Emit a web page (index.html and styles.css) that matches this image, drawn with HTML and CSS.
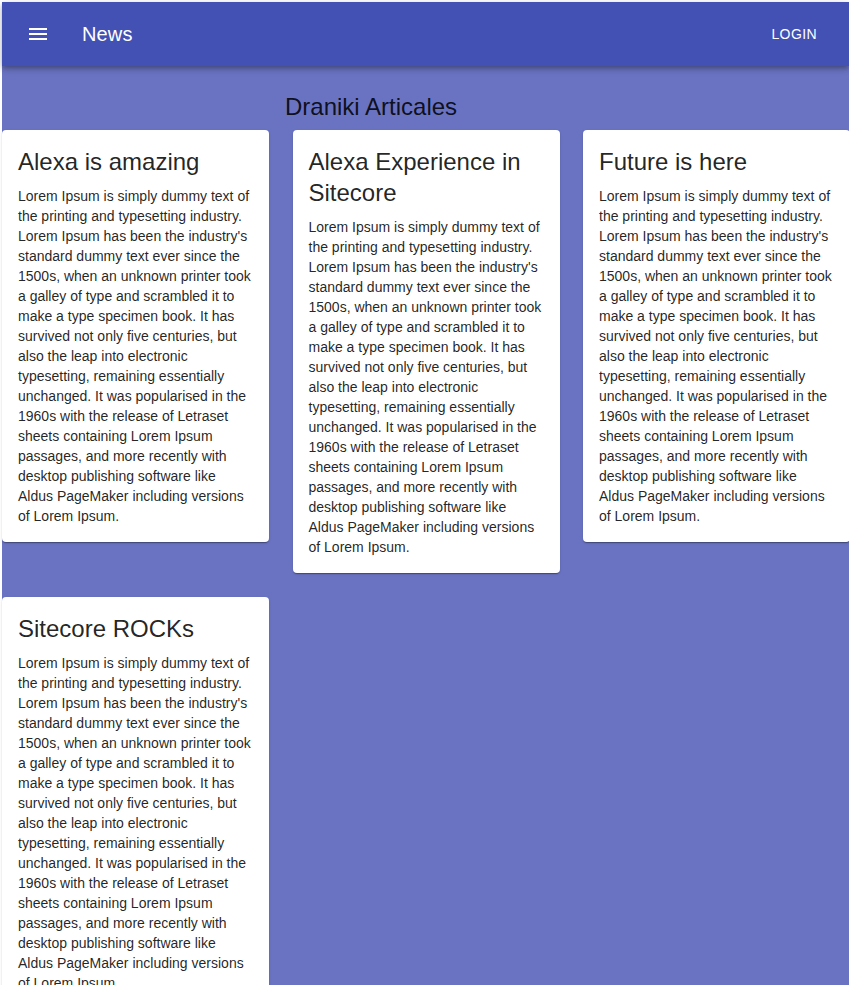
FILE: index.html
```html
<!DOCTYPE html>
<html lang="en">
<head>
<meta charset="utf-8">
<title>News</title>
<link rel="stylesheet" href="styles.css">
</head>
<body>
<div class="page">
  <header class="appbar">
    <button class="menu-btn" aria-label="menu">
      <svg width="24" height="24" viewBox="0 0 24 24"><path fill="#fff" d="M3 18h18v-2H3v2zm0-5h18v-2H3v2zm0-7v2h18V6H3z"/></svg>
    </button>
    <h1 class="brand">News</h1>
    <button class="login">Login</button>
  </header>
  <main class="content">
    <h2 class="heading">Draniki Articales</h2>
    <div class="grid">
      <article class="card">
        <h3 class="card-title">Alexa is amazing</h3>
        <p class="card-text">Lorem Ipsum is simply dummy text of the printing and typesetting industry. Lorem Ipsum has been the industry's standard dummy text ever since the 1500s, when an unknown printer took a galley of type and scrambled it to make a type specimen book. It has survived not only five centuries, but also the leap into electronic typesetting, remaining essentially unchanged. It was popularised in the 1960s with the release of Letraset sheets containing Lorem Ipsum passages, and more recently with desktop publishing software like Aldus PageMaker including versions of Lorem Ipsum.</p>
      </article>
      <article class="card">
        <h3 class="card-title">Alexa Experience in Sitecore</h3>
        <p class="card-text">Lorem Ipsum is simply dummy text of the printing and typesetting industry. Lorem Ipsum has been the industry's standard dummy text ever since the 1500s, when an unknown printer took a galley of type and scrambled it to make a type specimen book. It has survived not only five centuries, but also the leap into electronic typesetting, remaining essentially unchanged. It was popularised in the 1960s with the release of Letraset sheets containing Lorem Ipsum passages, and more recently with desktop publishing software like Aldus PageMaker including versions of Lorem Ipsum.</p>
      </article>
      <article class="card">
        <h3 class="card-title">Future is here</h3>
        <p class="card-text">Lorem Ipsum is simply dummy text of the printing and typesetting industry. Lorem Ipsum has been the industry's standard dummy text ever since the 1500s, when an unknown printer took a galley of type and scrambled it to make a type specimen book. It has survived not only five centuries, but also the leap into electronic typesetting, remaining essentially unchanged. It was popularised in the 1960s with the release of Letraset sheets containing Lorem Ipsum passages, and more recently with desktop publishing software like Aldus PageMaker including versions of Lorem Ipsum.</p>
      </article>
      <article class="card">
        <h3 class="card-title">Sitecore ROCKs</h3>
        <p class="card-text">Lorem Ipsum is simply dummy text of the printing and typesetting industry. Lorem Ipsum has been the industry's standard dummy text ever since the 1500s, when an unknown printer took a galley of type and scrambled it to make a type specimen book. It has survived not only five centuries, but also the leap into electronic typesetting, remaining essentially unchanged. It was popularised in the 1960s with the release of Letraset sheets containing Lorem Ipsum passages, and more recently with desktop publishing software like Aldus PageMaker including versions of Lorem Ipsum.</p>
      </article>
    </div>
  </main>
</div>
</body>
</html>
```
FILE: styles.css
```css
html, body {
  margin: 0;
  padding: 0;
  background: #fff;
  overflow: hidden;
}
body {
  padding: 2px 0 0 2px;
  font-family: "Liberation Sans", Arial, sans-serif;
  color: rgba(0, 0, 0, 0.87);
}
.page {
  background: #6a73c2;
  min-height: 983px;
}
.appbar {
  position: relative;
  z-index: 2;
  height: 64px;
  background: #4251b3;
  color: #fff;
  display: flex;
  align-items: center;
  padding: 0 24px 0 12px;
  box-shadow: 0 2px 4px -1px rgba(0,0,0,0.2), 0 4px 5px 0 rgba(0,0,0,0.14), 0 1px 10px 0 rgba(0,0,0,0.12);
}
.menu-btn {
  background: none;
  border: 0;
  padding: 12px;
  margin-right: 20px;
  display: flex;
  cursor: pointer;
}
.brand {
  margin: 0;
  font-size: 20px;
  font-weight: 500;
  letter-spacing: 0.15px;
  flex: 1;
  line-height: 32px;
}
.login {
  background: none;
  border: 0;
  color: #fff;
  font-family: inherit;
  font-size: 14px;
  font-weight: 500;
  text-transform: uppercase;
  letter-spacing: 0.4px;
  padding: 6px 8px;
  line-height: 24px;
}
.content {
  padding-top: 25px;
}
.heading {
  margin: 0 0 7px;
  padding-left: 283px;
  font-size: 24px;
  font-weight: 400;
  line-height: 32px;
  color: rgba(0, 0, 0, 0.87);
}
.grid {
  display: grid;
  grid-template-columns: 267px 267px 267px;
  column-gap: 23.5px;
  row-gap: 24px;
  align-items: start;
}
.card {
  background: #fff;
  border-radius: 4px;
  padding: 16px;
  box-shadow: 0 2px 1px -1px rgba(0,0,0,0.2), 0 1px 1px 0 rgba(0,0,0,0.14), 0 1px 3px 0 rgba(0,0,0,0.12);
}
.card-title {
  margin: 0 0 9px;
  font-size: 24px;
  font-weight: 400;
  line-height: 31px;
}
.card-text {
  margin: 0;
  font-size: 14px;
  line-height: 20px;
}
```
